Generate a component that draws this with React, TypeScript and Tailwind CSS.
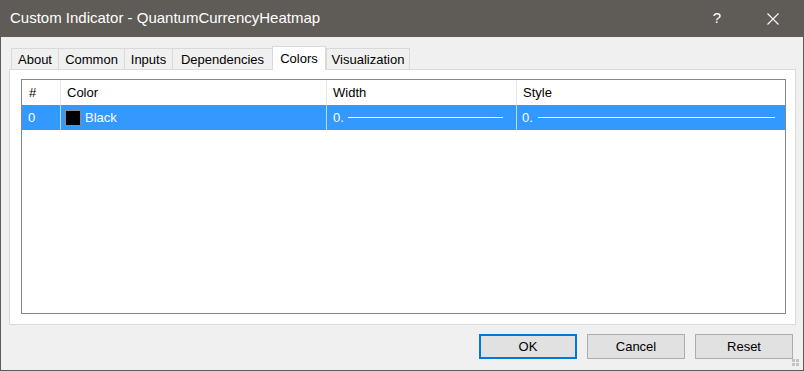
import React from "react"

const tabs = [
  { name: "About", w: "w-[47px]" },
  { name: "Common", w: "w-[66px]" },
  { name: "Inputs", w: "w-[48px]" },
  { name: "Dependencies", w: "w-[100px]" },
  { name: "Colors", w: "w-[54px]", active: true },
  { name: "Visualization", w: "w-[84px]" },
]

function CloseIcon() {
  return (
    <svg width="12" height="12" viewBox="0 0 12 12" className="text-white">
      <path d="M0.5 0.5 L11.5 11.5 M11.5 0.5 L0.5 11.5" stroke="currentColor" strokeWidth="1.1" fill="none" />
    </svg>
  )
}

function SizeGrip() {
  return (
    <svg width="8" height="8" viewBox="0 0 8 8" className="absolute right-[3px] bottom-[3px]">
      <rect x="0" y="0" width="3" height="3" fill="#c4c4c4" />
      <rect x="4" y="0" width="3" height="3" fill="#c4c4c4" />
      <rect x="0" y="4" width="3" height="3" fill="#c4c4c4" />
      <rect x="4" y="4" width="3" height="3" fill="#c4c4c4" />
    </svg>
  )
}

export default function App() {
  return (
    <div
      className="relative w-[804px] h-[371px] flex flex-col bg-[#f0f0f0] border border-t-0 border-[#5f5b57] text-black"
      style={{ fontFamily: '"Liberation Sans", Arial, sans-serif' }}
    >
      {/* title bar */}
      <div className="h-[37px] bg-[#5f5b57] flex items-center pl-[9px] pr-[24px] shrink-0">
        <span className="text-[15px] text-white">Custom Indicator - QuantumCurrencyHeatmap</span>
        <span className="ml-auto text-[15px] text-white mr-[46px]">?</span>
        <CloseIcon />
      </div>

      <div className="flex flex-col pl-[8px] pr-[7px] pt-[9px]">
        {/* tabs */}
        <div className="flex items-end h-[23px] pl-[2px] relative z-10">
          {tabs.map((t) =>
            t.active ? (
              <div
                key={t.name}
                className={`${t.w} h-[24px] -mb-[1px] bg-white border border-b-0 border-[#d9d9d9] text-[13px] flex items-start justify-center pt-[2px]`}
              >
                {t.name}
              </div>
            ) : (
              <div
                key={t.name}
                className={`${t.w} h-[21px] bg-[#f0f0f0] border border-b-0 border-r-0 last:border-r border-[#d9d9d9] text-[13px] flex items-center justify-center pt-[1px]`}
              >
                {t.name}
              </div>
            )
          )}
        </div>

        {/* panel */}
        <div className="h-[256px] bg-white border border-[#d9d9d9] pl-[11px] pr-[9px] pt-[9px] pb-[10px]">
          <div className="h-full border border-[#828790] bg-white flex flex-col">
            <div className="flex h-[25px] text-[13px]">
              <div className="w-[39px] border-r border-[#e5e5e5] pl-[7px] flex items-center">#</div>
              <div className="w-[266px] border-r border-[#e5e5e5] pl-[6px] flex items-center">Color</div>
              <div className="w-[190px] border-r border-[#e5e5e5] pl-[6px] flex items-center">Width</div>
              <div className="flex-1 pl-[6px] flex items-center">Style</div>
            </div>
            <div className="flex h-[25px] bg-[#3399ff] text-white text-[13px]">
              <div className="w-[39px] border-r border-[#b9dafc] pl-[6px] flex items-center">0</div>
              <div className="w-[266px] border-r border-[#b9dafc] pl-[4px] flex items-center gap-[4px]">
                <span className="w-[16px] h-[16px] bg-black border border-[#8a8a8a]" />
                <span>Black</span>
              </div>
              <div className="w-[190px] border-r border-[#b9dafc] pl-[6px] pr-[13px] flex items-center">
                <span>0.</span>
                <span className="flex-1 h-px bg-white ml-[4px]" />
              </div>
              <div className="flex-1 pl-[5px] pr-[10px] flex items-center">
                <span>0.</span>
                <span className="flex-1 h-px bg-white ml-[5px]" />
              </div>
            </div>
          </div>
        </div>
      </div>

      {/* buttons */}
      <div className="flex justify-end gap-[10px] pr-[10px] pt-[9px]">
        <button className="w-[98px] h-[25px] bg-[#e1e1e1] border-2 border-[#0078d7] text-[13px]">OK</button>
        <button className="w-[98px] h-[25px] bg-[#e1e1e1] border border-[#adadad] text-[13px]">Cancel</button>
        <button className="w-[98px] h-[25px] bg-[#e1e1e1] border border-[#adadad] text-[13px]">Reset</button>
      </div>

      <SizeGrip />
    </div>
  )
}
